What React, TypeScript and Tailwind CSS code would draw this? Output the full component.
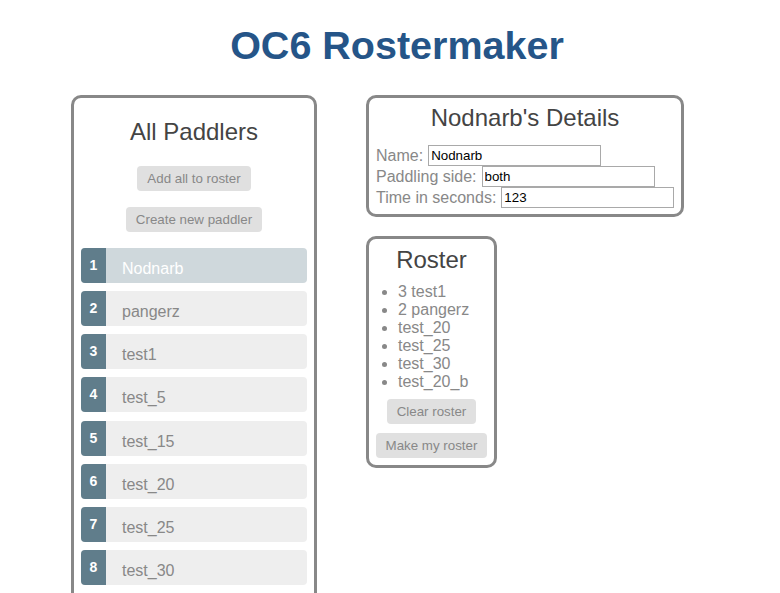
const paddlers = [
  { id: 1, name: "Nodnarb" },
  { id: 2, name: "pangerz" },
  { id: 3, name: "test1" },
  { id: 4, name: "test_5" },
  { id: 5, name: "test_15" },
  { id: 6, name: "test_20" },
  { id: 7, name: "test_25" },
  { id: 8, name: "test_30" },
];

const roster = ["3 test1", "2 pangerz", "test_20", "test_25", "test_30", "test_20_b"];

const btn =
  "whitespace-nowrap bg-[#e0e0e0] text-[#888] text-[13.33px] leading-[15px] px-[10px] py-[5px] rounded-[4px]";

const field =
  "shrink-0 border border-[#a9a9a9] text-black text-[13.33px] leading-[15px] px-[2px] py-[2px] w-[173px] h-[21px] outline-none";

export default function App() {
  const selected = 1;

  return (
    <div className="h-[593px] overflow-hidden bg-white font-['Liberation_Sans',Arial,sans-serif]">
      <h1 className="pt-[22px] pl-[14px] text-center text-[39.5px] leading-[46px] font-bold text-[#255588]">
        OC6 Rostermaker
      </h1>

      <div className="mt-[27px] flex items-start gap-[49px] pl-[71px]">
        <section className="w-[246px] border-[3px] border-[#888] rounded-[10px] px-[7px] pt-[20px] pb-[20px]">
          <h2 className="text-center text-[24px] leading-[28px] text-[#444]">All Paddlers</h2>
          <div className="mt-[20px] flex flex-col items-center gap-[16px]">
            <button className={btn}>Add all to roster</button>
            <button className={btn}>Create new paddler</button>
          </div>
          <ul className="mt-[16px] flex flex-col gap-[8.15px]">
            {paddlers.map((p) => (
              <li
                key={p.id}
                className={
                  "flex h-[35px] rounded-[4px] " +
                  (p.id === selected ? "bg-[#cfd8dc] text-white" : "bg-[#eeeeee] text-[#888]")
                }
              >
                <span className="w-[25px] shrink-0 rounded-l-[4px] bg-[#607d8b] pt-[10px] text-center text-[14px] leading-[14px] font-bold text-white">
                  {p.id}
                </span>
                <span className="pl-[16px] pt-[12px] text-[16px] leading-[18px]">{p.name}</span>
              </li>
            ))}
          </ul>
        </section>

        <div className="flex flex-col gap-[19px]">
          <section className="w-[318px] border-[3px] border-[#888] rounded-[10px] px-[7px] pt-[6px] pb-[6px] text-[16px] text-[#888]">
            <h2 className="text-center text-[24px] leading-[28px] text-[#444]">Nodnarb's Details</h2>
            <div className="mt-[13px] whitespace-nowrap">
              <div className="flex items-center h-[21px]">
                <span className="mr-[5px]">Name:</span>
                <input className={field} defaultValue="Nodnarb" />
              </div>
              <div className="flex items-center h-[21px]">
                <span className="mr-[5px]">Paddling side:</span>
                <input className={field} defaultValue="both" />
              </div>
              <div className="flex items-center h-[21px]">
                <span className="mr-[5px]">Time in seconds:</span>
                <input className={field} defaultValue="123" />
              </div>
            </div>
          </section>

          <section className="w-[131px] border-[3px] border-[#888] rounded-[10px] px-[5px] pt-[7px] pb-[7px] text-[#888]">
            <h2 className="text-center text-[24px] leading-[28px] text-[#444]">Roster</h2>
            <ul className="mt-[9px] list-disc pl-[24px] text-[16px] leading-[18px] whitespace-nowrap">
              {roster.map((r) => (
                <li key={r}>{r}</li>
              ))}
            </ul>
            <div className="mt-[8px] flex flex-col items-center gap-[9px]">
              <button className={btn}>Clear roster</button>
              <button className={btn}>Make my roster</button>
            </div>
          </section>
        </div>
      </div>
    </div>
  );
}
